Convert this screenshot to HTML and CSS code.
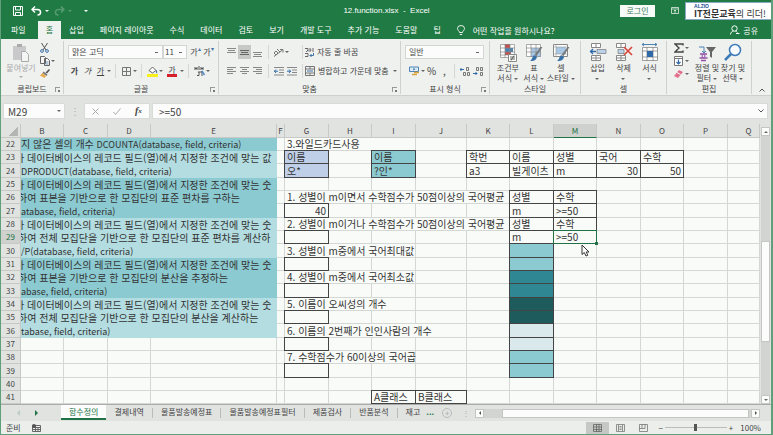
FILE: index.html
```
<!DOCTYPE html>
<html lang="ko">
<head>
	<meta charset="UTF-8">
	<title>12.function.xlsx - Excel</title>
	<link rel="stylesheet" href="styles.css">
</head>
<body>

<header class="titlebar">
	<div class="quick">
		<button class="icon" aria-label="저장"><svg width="10" height="10" viewBox="0 0 10 10"><path d="M.5.5h9v9h-9zM2.500.5v3.500h5v-3.500M2.500 9.500v-3h5v3" fill="none" stroke="#fff"/></svg></button>
		<button class="icon" aria-label="실행 취소"><svg width="11" height="10" viewBox="0 0 11 10"><path d="M1 3.500h5.500a3 2.700 0 0 1 0 5.500M4 .5l-3 3 3 3" fill="none" stroke="#fff" stroke-width="1.500"/></svg></button>
		<i class="caret light"></i>
		<button class="icon dim" aria-label="다시 실행"><svg width="11" height="10" viewBox="0 0 11 10"><path d="M10 3.500h-5.500a3 2.700 0 0 0 0 5.500M7 .5l3 3-3 3" fill="none" stroke="#fff" stroke-width="1.500"/></svg></button>
		<i class="caret light dim"></i>
		<i class="caret light more"></i>
	</div>
	<div class="doc">12.function.xlsx &nbsp;- &nbsp;Excel</div>
	<div class="account">
		<button class="login">로그인</button>
		<button class="icon" aria-label="리본 메뉴 표시 옵션"><svg width="8" height="7" viewBox="0 0 8 7"><path d="M.5.5h7v6h-7zM.5 2h7M4 6V3M2.800 4.200L4 3l1.200 1.200" fill="none" stroke="#dfeee4" stroke-width=".8"/></svg></button>
		<div class="banner">
			<small>ALZIO</small>
			<p><b>IT전문교육</b>의 리더!</p>
		</div>
	</div>
</header>

<nav class="menu">
	<a href="#" class="file">파일</a>
	<a href="#" class="current">홈</a>
	<a href="#">삽입</a>
	<a href="#">페이지 레이아웃</a>
	<a href="#">수식</a>
	<a href="#">데이터</a>
	<a href="#">검토</a>
	<a href="#">보기</a>
	<a href="#">개발 도구</a>
	<a href="#">추가 기능</a>
	<a href="#">도움말</a>
	<a href="#">팁</a>
	<a href="#" class="tell"><svg width="8" height="11" viewBox="0 0 8 11"><path d="M2.500 7.500c0-1.500-2-2-2-4a3.500 3 0 0 1 7 0c0 2-2 2.500-2 4zM2.800 9.500h2.400" fill="none" stroke="#fff" stroke-width=".9"/></svg>어떤 작업을 원하시나요?</a>
	<a href="#" class="share"><svg width="10" height="10" viewBox="0 0 10 10"><circle cx="4.500" cy="3.500" r="2.700" fill="none" stroke="#fff"/><path d="M.5 9.500c0-2 1.500-3 3-3.500M5.500 6.200c1.200.3 1.500.8 2 1.300M6 8.500h3.500" fill="none" stroke="#fff"/></svg>공유</a>
</nav>

<div class="ribbon">
	<section class="group clipboard">
		<div class="tools">
			<button class="big off">
				<svg width="18" height="20" viewBox="0 0 18 20"><path d="M1 3h13v14H1z" fill="#c9c9cb"/><path d="M5 1h5v3H5z" fill="#aaa"/><path d="M9.500 8.500h4l3 3v7h-7z" fill="#f4f4f4" stroke="#aaa"/></svg>
				<span>붙여넣기</span><i class="caret"></i>
			</button>
			<div class="stack">
				<button class="icon" aria-label="잘라내기"><svg width="9" height="10" viewBox="0 0 9 10"><path d="M1.500 0l4.500 7M7.500 0L3 7" stroke="#555" fill="none"/><circle cx="2" cy="8" r="1.400" fill="none" stroke="#4173a8"/><circle cx="7" cy="8" r="1.400" fill="none" stroke="#4173a8"/></svg></button>
				<div class="line"><button class="icon" aria-label="복사"><svg width="10" height="10" viewBox="0 0 10 10"><path d="M.5.5h4l1 1v6h-5zM4.500 2.500h3l2 2v5h-5z" fill="#f5f5f5" stroke="#666"/><path d="M5.500 6h3M5.500 8h3" stroke="#4173a8" stroke-width=".7"/></svg></button><i class="caret"></i></div>
				<button class="icon" aria-label="서식 복사"><svg width="10" height="9" viewBox="0 0 10 9"><path d="M5.500 3.500L9 0l1 1-3 3.500z" fill="#555"/><path d="M3.500 2.500l4 3-1 1.500-4-3z" fill="#777"/><path d="M2.500 4l3.500 3-1.500 2L0 6.500z" fill="#e7ab4d"/></svg></button>
			</div>
		</div>
		<h2>클립보드<i class="launch"></i></h2>
	</section>

	<section class="group font">
		<div class="tools rows">
			<div class="line">
				<select class="fontname" aria-label="글꼴"><option>맑은 고딕</option></select>
				<select class="fontsize" aria-label="글꼴 크기"><option>11</option></select>
				<button class="letter up">가<sup>▴</sup></button>
				<button class="letter">가<sup>▾</sup></button>
			</div>
			<div class="line">
				<button class="letter"><b>가</b></button>
				<button class="letter"><em>가</em></button>
				<button class="letter"><u>가</u></button>
				<i class="caret"></i><i class="sep"></i>
				<button class="icon" aria-label="테두리"><svg width="9" height="9" viewBox="0 0 9 9"><path d="M.5.5h8v8h-8zM4.500 0v9M0 4.500h9" fill="none" stroke="#777"/></svg></button>
				<i class="caret"></i><i class="sep"></i>
				<button class="icon" aria-label="채우기 색"><svg width="11" height="11" viewBox="0 0 11 11"><path d="M2 4.500L5.500 1 9 4.500 5.500 7z" fill="#fff" stroke="#666"/><path d="M9 4c1.500 1 1.500 2.500.8 3.500-.8-.5-.8-2-.8-3.500z" fill="#4173a8"/><path d="M0 8h11v3H0z" fill="#f7f01b"/></svg></button>
				<i class="caret"></i>
				<button class="letter red">가</button>
				<i class="caret"></i><i class="sep"></i>
				<button class="icon" aria-label="윗주 필드"><svg width="11" height="10" viewBox="0 0 11 10"><path d="M1 1v3M3 1v3M1 2.500h2M5 0v4M7 1v3M9 1v3M7 2.500h2M4 6h4M5 6v3.500M8 5v5M3 9.500h2" fill="none" stroke="#555"/><path d="M8 5l2.500 4" stroke="#4b8ac9" stroke-width="1.500"/></svg></button>
				<i class="caret"></i>
			</div>
		</div>
		<h2>글꼴<i class="launch"></i></h2>
	</section>

	<section class="group align">
		<div class="tools rows">
			<div class="line">
				<button class="icon" aria-label="위쪽 맞춤"><svg width="9" height="9" viewBox="0 0 9 9"><path d="M0 .5h9M1 2.500h7M0 4.500h9" stroke="#888"/></svg></button>
				<button class="icon pressed" aria-label="가운데 맞춤"><svg width="9" height="9" viewBox="0 0 9 9"><path d="M0 2.500h9M1 4.500h7M0 6.500h9" stroke="#666"/></svg></button>
				<button class="icon" aria-label="아래쪽 맞춤"><svg width="9" height="9" viewBox="0 0 9 9"><path d="M0 4.500h9M1 6.500h7M0 8.500h9" stroke="#888"/></svg></button>
				<i class="sep"></i>
				<button class="icon" aria-label="방향"><svg width="11" height="9" viewBox="0 0 11 9"><path d="M1 8.500L9.500 2M7 1.500h3v3M1 5l2-2 2 2-2 2zM4 1l3 3" fill="none" stroke="#777"/></svg></button>
				<i class="caret"></i><i class="sep wide"></i>
				<button class="text"><svg width="9" height="9" viewBox="0 0 9 9"><path d="M0 .5h3v3M1 4l2-2M5 0v4M5 2h1.500M8 0v4M0 5.500h3v3M0 8.500h3" fill="none" stroke="#666"/><path d="M8.500 5v2.500H5M6.500 6L5 7.500 6.500 9" fill="none" stroke="#4173a8"/></svg>자동 줄 바꿈</button>
			</div>
			<div class="line">
				<button class="icon" aria-label="왼쪽 맞춤"><svg width="9" height="8" viewBox="0 0 9 8"><path d="M0 .5h9M0 2.500h6M0 4.500h9M0 6.500h6" stroke="#888"/></svg></button>
				<button class="icon" aria-label="가운데"><svg width="9" height="8" viewBox="0 0 9 8"><path d="M0 .5h9M2 2.500h5M0 4.500h9M2 6.500h5" stroke="#888"/></svg></button>
				<button class="icon" aria-label="오른쪽 맞춤"><svg width="9" height="8" viewBox="0 0 9 8"><path d="M0 .5h9M3 2.500h6M0 4.500h9M3 6.500h6" stroke="#888"/></svg></button>
				<i class="sep"></i>
				<button class="icon" aria-label="내어쓰기"><svg width="10" height="9" viewBox="0 0 10 9"><path d="M0 .5h10M5 3h5M5 5.500h5M0 8h10" stroke="#888"/><path d="M0 4.200h4M2 2.500L.5 4.200 2 6" fill="none" stroke="#2f69a8"/></svg></button>
				<button class="icon" aria-label="들여쓰기"><svg width="10" height="9" viewBox="0 0 10 9"><path d="M0 .5h10M5 3h5M5 5.500h5M0 8h10" stroke="#888"/><path d="M0 4.200h4M2 2.500l1.500 1.700L2 6" fill="none" stroke="#2f69a8"/></svg></button>
				<i class="sep"></i>
				<button class="text"><svg width="10" height="10" viewBox="0 0 10 10"><path d="M.5.5h9v9h-9zM0 3h10M0 7h10M5 0v3M5 7v3" fill="none" stroke="#777"/><path d="M2 5h6" stroke="#4173a8"/></svg>병합하고 가운데 맞춤</button>
				<i class="caret"></i>
			</div>
		</div>
		<h2>맞춤<i class="launch"></i></h2>
	</section>

	<section class="group number">
		<div class="tools rows">
			<div class="line"><select class="format" aria-label="표시 형식"><option>일반</option></select></div>
			<div class="line">
				<button class="icon" aria-label="회계 표시 형식"><svg width="11" height="10" viewBox="0 0 11 10"><path d="M.5 1h9v4.500h-9z" fill="#dceaf5" stroke="#4c83b5"/><circle cx="5" cy="3.200" r="1" fill="#4c83b5"/><path d="M5 6.500h5M3 8.500h5" stroke="#dba33b" stroke-width="1.600"/></svg></button>
				<i class="caret"></i>
				<button class="icon percent">%</button>
				<button class="icon percent">,</button>
				<i class="sep"></i>
				<button class="icon" aria-label="자릿수 늘림"><svg width="10" height="9" viewBox="0 0 10 9"><path d="M0 2.500h4M1.500 1L0 2.500 1.500 4" fill="none" stroke="#2f69a8"/><path d="M6.500.5h2v3h-2zM3.500 5.500h2v3h-2zM7.500 5.500h2v3h-2z" fill="none" stroke="#777"/></svg></button>
				<button class="icon" aria-label="자릿수 줄임"><svg width="10" height="9" viewBox="0 0 10 9"><path d="M0 6.500h4M2.500 5L4 6.500 2.500 8" fill="none" stroke="#2f69a8"/><path d="M3.500.5h2v3h-2zM7.500.5h2v3h-2zM7.500 5.500h2v3h-2z" fill="none" stroke="#777"/></svg></button>
			</div>
		</div>
		<h2>표시 형식<i class="launch"></i></h2>
	</section>

	<section class="group styles">
		<div class="tools">
			<button class="big">
				<svg width="18" height="20" viewBox="0 0 18 20"><path d="M1 1h15v14H1z" fill="#fff"/><path d="M6 1h5v4H6zM6 9h6v3H6z" fill="#c5504b"/><path d="M6 5h8v4H6z" fill="#4c83b5"/><path d="M1.500 1.500h14v13h-14zM1 5h15M1 9h15M1 12h15M6 1v14M11 1v14" fill="none" stroke="#888" stroke-width=".7"/><path d="M9.500 11.500h8v7h-8z" fill="#fff" stroke="#888"/><path d="M11 14h5M11 16h5M15 12.500l-3 5" stroke="#444" stroke-width=".8"/></svg>
				<span>조건부<br>서식 <i class="caret"></i></span>
			</button>
			<button class="big">
				<svg width="18" height="20" viewBox="0 0 18 20"><path d="M1.500 1.500h14v12h-14z" fill="#fff"/><path d="M6 5h10v9H6z" fill="#a9c8e6"/><path d="M1.500 1.500h14v12h-14zM1 5h15M1 9h15M6 1v13M11 1v13" fill="none" stroke="#888" stroke-width=".7"/><path d="M17.500 4l-6 9-2-1 6-8z" fill="#777"/><path d="M9 12l3 2c-1 4-4 4-7 4 2-1 2-4 4-6z" fill="#376fa9"/></svg>
				<span>표<br>서식 <i class="caret"></i></span>
			</button>
			<button class="big">
				<svg width="18" height="20" viewBox="0 0 18 20"><path d="M1.500 1.500h14v12h-14z" fill="#fff" stroke="#888"/><path d="M4 4h10v7H4z" fill="#a9c8e6"/><path d="M1 4h15M1 11h15M4 1v13" stroke="#999" stroke-width=".6"/><path d="M17.500 4l-6 9-2-1 6-8z" fill="#777"/><path d="M9 12l3 2c-1 4-4 4-7 4 2-1 2-4 4-6z" fill="#376fa9"/></svg>
				<span>셀<br>스타일 <i class="caret"></i></span>
			</button>
		</div>
		<h2>스타일</h2>
	</section>

	<section class="group cells">
		<div class="tools">
			<button class="big">
				<svg width="18" height="20" viewBox="0 0 18 20"><path d="M2.500.5h9v4h-9zM7 0v5M2.500 12.500h9v5h-9zM7 12v6M2 15h10" fill="#fff" stroke="#888"/><path d="M8 6.500h9v4H8z" fill="#b9d2ea" stroke="#777" stroke-width=".7"/><path d="M1 8.500h6M4 6L1.500 8.500 4 11" fill="none" stroke="#2f69a8" stroke-width="1.300"/></svg>
				<span>삽입<br><i class="caret"></i></span>
			</button>
			<button class="big">
				<svg width="18" height="20" viewBox="0 0 18 20"><path d="M1.500.5h9v4h-9zM6 0v5M1.500 12.500h9v5h-9zM6 12v6M1 15h10" fill="#fff" stroke="#888"/><path d="M3 6.500h6v4H3z" fill="#b9d2ea" stroke="#777" stroke-width=".7"/><path d="M9 4l8 8M17 4l-8 8" stroke="#d9463a" stroke-width="1.700"/></svg>
				<span>삭제<br><i class="caret"></i></span>
			</button>
			<button class="big">
				<svg width="18" height="20" viewBox="0 0 18 20"><path d="M1.500 4.500h15v13h-15zM1 8h16M1 14h16M6 4v14M12 4v14" fill="#fff" stroke="#888" stroke-width=".8"/><path d="M6 8h6v6H6z" fill="#2f69a8"/><path d="M1 1.500h15M3 0L1 1.500 3 3M14 0l2 1.500L14 3" fill="none" stroke="#4c83b5"/></svg>
				<span>서식<br><i class="caret"></i></span>
			</button>
		</div>
		<h2>셀</h2>
	</section>

	<section class="group edit">
		<div class="tools">
			<div class="stack">
				<div class="line"><button class="icon" aria-label="합계"><svg width="10" height="10" viewBox="0 0 10 10"><path d="M9 2.500V1H1l4 4-4 4h8V7.500" fill="none" stroke="#444" stroke-width="1.400"/></svg></button><i class="caret"></i></div>
				<div class="line"><button class="icon" aria-label="채우기"><svg width="9" height="10" viewBox="0 0 9 10"><path d="M.5.5h8v9h-8zM0 2.500h9" fill="#fff" stroke="#777"/><path d="M4.500 3.500V8M2.500 6l2 2 2-2" fill="none" stroke="#2f69a8" stroke-width="1.200"/></svg></button><i class="caret"></i></div>
				<div class="line"><button class="icon" aria-label="지우기"><svg width="9" height="8" viewBox="0 0 9 8"><path d="M5 0l4 2-5 6-4-2z" fill="#e2708c"/><path d="M3 2.500l3.500 2" stroke="#fff"/></svg></button><i class="caret"></i></div>
			</div>
			<button class="big">
				<svg width="20" height="20" viewBox="0 0 20 20"><path d="M2 4h5v6M5 8l2 2 2-2" fill="none" stroke="#4c83b5"/><path d="M3 11h7M2.500 15h8M4 17.500h5" stroke="#9250a8" stroke-width="1.300"/><circle cx="6.500" cy="13" r="1.500" fill="none" stroke="#9250a8"/><path d="M9 4h10l-4 5v6l-2-1.500V9z" fill="#666"/></svg>
				<span>정렬 및<br>필터 <i class="caret"></i></span>
			</button>
			<button class="big">
				<svg width="18" height="20" viewBox="0 0 18 20"><circle cx="11" cy="7" r="5.500" fill="#fafcff" stroke="#3d7ab8" stroke-width="1.500"/><path d="M7 11l-6 6" stroke="#3d7ab8" stroke-width="2.500"/></svg>
				<span>찾기 및<br>선택 <i class="caret"></i></span>
			</button>
		</div>
		<h2>편집</h2>
	</section>
	<button class="fold" aria-label="리본 메뉴 축소"><svg width="6" height="4" viewBox="0 0 6 4"><path d="M.5 3.500L3 1l2.500 2.500" fill="none" stroke="#555"/></svg></button>
</div>

<div class="formula">
	<label class="namebox"><input type="text" value="M29" aria-label="이름 상자"><i class="caret"></i></label>
	<span class="grip">⋮</span>
	<div class="fx">
		<button class="icon" aria-label="취소"><svg width="7" height="7" viewBox="0 0 7 7"><path d="M.5.5l6 6M6.500.5l-6 6" stroke="#aaa"/></svg></button>
		<button class="icon" aria-label="입력"><svg width="8" height="7" viewBox="0 0 8 7"><path d="M.5 4l2 2.500L7.500.5" fill="none" stroke="#aaa"/></svg></button>
		<button class="icon func">f<sub>x</sub></button>
	</div>
	<label class="content"><input type="text" value="&gt;=50" aria-label="수식 입력줄"><svg width="6" height="4" viewBox="0 0 6 4"><path d="M.5.5L3 3 5.500.5" fill="none" stroke="#555"/></svg></label>
</div>

<main class="sheet">
<table>
	<colgroup>
		<col class="w20"><col class="w43"><col class="w44"><col class="w43"><col class="w126"><col class="w8"><col class="w44"><col class="w43"><col class="w44"><col class="w51"><col class="w43"><col class="w44"><col class="w43"><col class="w44"><col class="w43"><col class="w44"><col>
	</colgroup>
	<thead>
		<tr><th class="corner"></th><th>B</th><th>C</th><th>D</th><th>E</th><th>F</th><th>G</th><th>H</th><th>I</th><th>J</th><th>K</th><th>L</th><th class="on">M</th><th>N</th><th>O</th><th>P</th><th class="last">Q</th></tr>
	</thead>
	<tbody>
		<tr><th>22</th><td colspan="4" class="teal">지 않은 셀의 개수 <span class="en">DCOUNTA(database, field, criteria)</span></td><td></td><td colspan="3">3.와일드카드사용</td><td></td><td></td><td></td><td></td><td></td><td></td><td></td><td></td></tr>
		<tr><th>23</th><td colspan="4" class="pale cut">가 데이터베이스의 레코드 필드(열)에서 지정한 조건에 맞는 값</td><td></td><td class="box blue">이름</td><td></td><td class="box teal">이름</td><td></td><td class="box">학번</td><td class="box">이름</td><td class="box">성별</td><td class="box">국어</td><td class="box">수학</td><td></td><td></td></tr>
		<tr><th>24</th><td colspan="4" class="pale"><span class="en">DPRODUCT(database, field, criteria)</span></td><td></td><td class="box blue">오*</td><td></td><td class="box teal">?인*</td><td></td><td class="box">a3</td><td class="box">빌게이츠</td><td class="box">m</td><td class="box num">30</td><td class="box num">50</td><td></td><td></td></tr>
		<tr><th>25</th><td colspan="4" class="teal cut">가 데이터베이스의 레코드 필드(열)에서 지정한 조건에 맞는 숫</td><td></td><td></td><td></td><td></td><td></td><td></td><td></td><td></td><td></td><td></td><td></td><td></td></tr>
		<tr><th>26</th><td colspan="4" class="teal nip">하여 표본을 기반으로 한 모집단의 표준 편차를 구하는</td><td></td><td colspan="5">1. 성별이 m이면서 수학점수가 50점이상의 국어평균</td><td class="box">성별</td><td class="box">수학</td><td></td><td></td><td></td><td></td></tr>
		<tr><th>27</th><td colspan="4" class="teal"><span class="en">atabase, field, criteria)</span></td><td></td><td class="box num">40</td><td></td><td></td><td></td><td></td><td class="box">m</td><td class="box">&gt;=50</td><td></td><td></td><td></td><td></td></tr>
		<tr><th>28</th><td colspan="4" class="pale cut">가 데이터베이스의 레코드 필드(열)에서 지정한 조건에 맞는 숫</td><td></td><td colspan="5">2. 성별이 m이거나 수학점수가 50점이상의 국어평균</td><td class="box">성별</td><td class="box">수학</td><td></td><td></td><td></td><td></td></tr>
		<tr><th class="on">29</th><td colspan="4" class="pale nip">하여 전체 모집단을 기반으로 한 모집단의 표준 편차를 계산하</td><td></td><td class="box"></td><td></td><td></td><td></td><td></td><td class="box">m</td><td class="box active">&gt;=50<svg class="pointer" width="9" height="13" viewBox="0 0 9 13"><path d="M1 1v9.500l2.300-2L5 12l1.800-.8L5.200 8H8z" fill="#fff" stroke="#333"/></svg></td><td></td><td></td><td></td><td></td></tr>
		<tr><th>30</th><td colspan="4" class="pale"><span class="en">/P(database, field, criteria)</span></td><td></td><td colspan="3">3. 성별이 m중에서 국어최대값</td><td></td><td></td><td class="box teal"></td><td></td><td></td><td></td><td></td><td></td></tr>
		<tr><th>31</th><td colspan="4" class="teal cut">가 데이터베이스의 레코드 필드(열)에서 지정한 조건에 맞는 숫</td><td></td><td class="box"></td><td></td><td></td><td></td><td></td><td class="box teal"></td><td></td><td></td><td></td><td></td><td></td></tr>
		<tr><th>32</th><td colspan="4" class="teal nip">하여 표본을 기반으로 한 모집단의 분산을 추정하는</td><td></td><td colspan="3">4. 성별이 m중에서 국어최소값</td><td></td><td></td><td class="box deep"></td><td></td><td></td><td></td><td></td><td></td></tr>
		<tr><th>33</th><td colspan="4" class="teal"><span class="en">abase, field, criteria)</span></td><td></td><td class="box"></td><td></td><td></td><td></td><td></td><td class="box deep"></td><td></td><td></td><td></td><td></td><td></td></tr>
		<tr><th>34</th><td colspan="4" class="pale cut">가 데이터베이스의 레코드 필드(열)에서 지정한 조건에 맞는 숫</td><td></td><td colspan="3">5. 이름이 오씨성의 개수</td><td></td><td></td><td class="box dark"></td><td></td><td></td><td></td><td></td><td></td></tr>
		<tr><th>35</th><td colspan="4" class="pale nip">하여 전체 모집단을 기반으로 한 모집단의 분산을 계산하는</td><td></td><td class="box"></td><td></td><td></td><td></td><td></td><td class="box dark"></td><td></td><td></td><td></td><td></td><td></td></tr>
		<tr><th>36</th><td colspan="4" class="pale"><span class="en">tabase, field, criteria)</span></td><td></td><td colspan="4">6. 이름의 2번째가 인인사람의 개수</td><td></td><td class="box mist"></td><td></td><td></td><td></td><td></td><td></td></tr>
		<tr><th>37</th><td></td><td></td><td></td><td></td><td></td><td class="box"></td><td></td><td></td><td></td><td></td><td class="box mist"></td><td></td><td></td><td></td><td></td><td></td></tr>
		<tr><th>38</th><td></td><td></td><td></td><td></td><td></td><td colspan="3">7. 수학점수가 60이상의 국어곱</td><td></td><td></td><td class="box teal"></td><td></td><td></td><td></td><td></td><td></td></tr>
		<tr><th>39</th><td></td><td></td><td></td><td></td><td></td><td class="box"></td><td></td><td></td><td></td><td></td><td class="box teal"></td><td></td><td></td><td></td><td></td><td></td></tr>
		<tr><th>40</th><td></td><td></td><td></td><td></td><td></td><td></td><td></td><td></td><td></td><td></td><td></td><td></td><td></td><td></td><td></td><td></td></tr>
		<tr><th>41</th><td></td><td></td><td></td><td></td><td></td><td></td><td></td><td class="box">A클래스</td><td class="box">B클래스</td><td></td><td></td><td></td><td></td><td></td><td></td><td></td></tr>
	</tbody>
</table>
<div class="vscroll">
	<button aria-label="위로"><i class="caret flip"></i></button>
	<div class="track"><div class="thumb"></div></div>
	<button aria-label="아래로"><i class="caret"></i></button>
</div>
</main>

<div class="tabs">
	<div class="arrows"><i class="left"></i><i class="right"></i></div>
	<a href="#" class="current">함수정의</a>
	<a href="#">결제내역</a>
	<a href="#">물품발송예정표</a>
	<a href="#">물품발송예정표필터</a>
	<a href="#">제품검사</a>
	<a href="#">반품분석</a>
	<a href="#" class="end">재고</a>
	<span class="dots">...</span>
	<button class="add" aria-label="새 시트">+</button>
	<span class="grip">⋮</span>
	<div class="hscroll">
		<button aria-label="왼쪽"><i class="left"></i></button>
		<div class="track"><div class="thumb"></div></div>
		<button aria-label="오른쪽"><i class="right"></i></button>
	</div>
</div>

<footer class="status">
	<span>준비</span>
	<svg width="9" height="8" viewBox="0 0 9 8"><path d="M.5 1.500h8v6h-8zM0 3.500h9M0 5.500h9M3.500 1v7M6 3v5" fill="none" stroke="#666"/><circle cx="2" cy="2" r="2" fill="#555"/></svg>
	<div class="views">
		<button class="pressed" aria-label="기본"><svg width="9" height="8" viewBox="0 0 9 8"><path d="M.5.5h8v7h-8zM0 3h9M0 5.500h9M3.500 0v8M6 0v8" fill="none" stroke="#666" stroke-width=".8"/></svg></button>
		<button aria-label="페이지 레이아웃"><svg width="9" height="8" viewBox="0 0 9 8"><path d="M.5.5h8v7h-8zM2.500 1v6M6.500 1v6M3.500 2.500h2M3.500 4h2M3.500 5.500h2" fill="none" stroke="#777" stroke-width=".8"/></svg></button>
		<button aria-label="페이지 나누기"><svg width="9" height="8" viewBox="0 0 9 8"><path d="M.5.5h8v7h-8zM3 0v4.500M6 0v4.500M0 4.500h6" fill="none" stroke="#777" stroke-width=".8"/></svg></button>
	</div>
	<div class="zoom">
		<button aria-label="축소">−</button>
		<input type="range" min="10" max="190" value="100" aria-label="확대/축소">
		<button aria-label="확대">+</button>
		<span>100%</span>
	</div>
</footer>

</body>
</html>
```
FILE: styles.css
```
* {
	box-sizing: border-box;
}

body {
	margin: 0;
	min-height: 100vh;
	display: flex;
	flex-direction: column;
	border: 1px solid #5f9f79;
	border-top: none;
	border-right-width: 2px;
	background: #e1e3e1;
	color: #444;
	font-family: "Noto Sans CJK KR", sans-serif;
	font-size: 8px;
	line-height: 10px;
	overflow: hidden;
}

a {
	color: inherit;
	text-decoration: none;
}

button, input, select {
	font: inherit;
	color: inherit;
	margin: 0;
	padding: 0;
	border: none;
	background: none;
}

svg {
	display: block;
	flex: none;
}

p, h2 {
	margin: 0;
}

.icon {
	display: flex;
	align-items: center;
	justify-content: center;
	width: 13px;
	height: 14px;
}

.pressed {
	background: #c6c8c6;
}

.caret {
	display: inline-block;
	flex: none;
	border: 2px solid transparent;
	border-top-color: #666;
	border-bottom: none;
}

.caret.light {
	border-top-color: #fff;
}

.caret.flip {
	transform: rotate(180deg);
}

.left, .right {
	border: 3px solid transparent;
	border-left-color: #217346;
	border-right: none;
}

.left {
	transform: rotate(180deg);
}

.line {
	display: flex;
	align-items: center;
}

.dim {
	opacity: .25;
}

/* title */

.titlebar, .menu {
	background: #1f7a43;
	color: #fff;
	margin: 0 -2px 0 -1px;
	display: flex;
}

.titlebar {
	height: 21px;
	justify-content: space-between;
}

.quick, .account {
	flex: 1;
	display: flex;
	align-items: center;
}

.quick .icon:first-child {
	margin-left: 11px;
}

.quick .icon + .icon {
	margin-left: 6px;
}

.quick .caret {
	margin: 0 4px 0 2px;
}

.quick .more {
	margin-left: 8px;
}

.doc {
	font-family: "Liberation Sans", sans-serif;
	line-height: 21px;
}

.account {
	justify-content: flex-end;
}

.login {
	width: 35px;
	height: 12px;
	margin-right: 13px;
	background: #f8faf8;
	color: #3f7c59;
}

.banner {
	width: 88px;
	height: 18px;
	margin-left: 4px;
	padding: 1px 0 0 8px;
	background: #fff;
	border: 1px solid #8ba9c4;
	color: #333;
	font-size: 9px;
	line-height: 11px;
	white-space: nowrap;
}

.banner small {
	display: block;
	color: #1d4f91;
	font-family: "Liberation Sans", sans-serif;
	font-size: 5px;
	font-weight: bold;
	line-height: 4px;
}

.menu {
	height: 18px;
	line-height: 17px;
}

.menu a {
	padding: 0 8px;
	white-space: nowrap;
}

.menu .file {
	padding: 0 12px 0 11px;
}

.menu .current {
	background: #f0f2f0;
	color: #1f7a43;
}

.menu .tell, .menu .share {
	display: flex;
	align-items: center;
	gap: 8px;
}

.menu .share {
	gap: 3px;
	margin-left: auto;
	padding-right: 15px;
}

/* ribbon */

.ribbon {
	display: flex;
	height: 57px;
	background: #eff1ef;
	border-bottom: 1px solid #cdd0cd;
}

.group {
	flex: none;
	display: flex;
	flex-direction: column;
	margin: 2px 0 1px;
	border-right: 1px solid #cfd1cf;
}

.group h2 {
	position: relative;
	font-size: 8px;
	font-weight: normal;
	line-height: 10px;
	text-align: center;
}

.launch {
	position: absolute;
	right: 3px;
	bottom: 2px;
	width: 5px;
	height: 5px;
	border: 1px solid #999;
	border-right: none;
	border-bottom: none;
}

.launch::after {
	content: "";
	position: absolute;
	right: 0;
	bottom: 0;
	width: 2px;
	height: 2px;
	background: #777;
}

.tools {
	flex: 1;
	display: flex;
	justify-content: center;
}

.tools.rows {
	flex-direction: column;
	justify-content: flex-start;
	padding: 4px 0 0 4px;
	gap: 5px;
}

.rows .line {
	height: 14px;
}

.stack {
	width: 22px;
}

.stack .icon {
	height: 13px;
}

.clipboard { width: 63px; }
.font { width: 155px; }
.align { width: 182px; }
.number { width: 89px; }
.styles { width: 91px; }
.cells { width: 86px; }
.edit { width: 85px; }

.big {
	display: flex;
	flex-direction: column;
	align-items: center;
	justify-content: flex-start;
	min-width: 26px;
	padding-top: 2px;
	line-height: 10px;
	white-space: nowrap;
}

.big .caret {
	vertical-align: middle;
}

.off {
	color: #aaa;
	width: 34px;
}

.off .caret {
	margin-top: 3px;
	border-top-color: #aaa;
}

select {
	appearance: none;
	height: 14px;
	padding: 0 3px;
	border: 1px solid #d3d5d3;
	background: #fbfcfb linear-gradient(#666, #666) no-repeat right 4px center / 3px 1px;
}

.fontname { width: 95px; }

.fontsize {
	width: 24px;
	padding: 0 1px;
}

.format { width: 79px; }

.letter {
	width: 13px;
	white-space: nowrap;
}

.letter sup {
	color: #4173a8;
	font-size: 6px;
	line-height: 1px;
}

.letter.up {
	margin-left: 2px;
}

.letter.red {
	height: 11px;
	width: 10px;
	margin: 0 3px 0 4px;
	line-height: 8px;
	border-bottom: 3px solid #d8202a;
}

.sep {
	width: 1px;
	height: 14px;
	margin: 0 4px;
	background: #d5d7d5;
}

.sep + .text {
	margin-left: -1px;
}

.align .rows {
	padding-left: 6px;
}

.align .sep {
	margin-right: 3px;
}

.align .sep.wide {
	margin-left: 13px;
}

.number .icon:first-child {
	margin-left: 3px;
}

.number .sep {
	margin: 0 3px;
}

.text {
	display: flex;
	align-items: center;
	gap: 3px;
	margin-right: 4px;
	white-space: nowrap;
}

.percent {
	font-size: 10px;
}

.fold {
	display: flex;
	align-items: flex-end;
	justify-content: center;
	flex: 1;
	padding-bottom: 3px;
}

/* formula bar */

.formula {
	display: flex;
	height: 28px;
	padding: 7px 3px 5px 2px;
	font-size: 10px;
}

.formula label, .fx {
	display: flex;
	align-items: center;
	background: #fbfcfb;
	border: 1px solid #d9dbd9;
}

.formula input {
	width: 100%;
	padding-left: 4px;
}

.namebox {
	width: 62px;
	padding-right: 3px;
}

.grip {
	width: 19px;
	color: #aaa;
	text-align: center;
	line-height: 15px;
}

.fx {
	width: 66px;
	justify-content: space-around;
}

.func {
	font-family: "Liberation Serif", serif;
	font-style: italic;
	font-weight: bold;
}

.func sub {
	font-size: 7px;
}

.formula .content {
	flex: 1;
	margin-left: 2px;
	padding: 0 3px 0 2px;
}

/* grid */

.sheet {
	display: flex;
}

table {
	flex: 1;
	width: 0;
	table-layout: fixed;
	border-collapse: separate;
	border-spacing: 0;
	background: #f9fbf8;
	color: #333;
	font-size: 10px;
	line-height: 12px;
}

.w8 { width: 8px; }
.w20 { width: 20px; }
.w43 { width: 43px; }
.w44 { width: 44px; }
.w51 { width: 51px; }
.w126 { width: 126px; }

tr {
	height: 13px;
}

thead tr, tbody tr:nth-child(3n) {
	height: 14px;
}

td {
	padding: 0 2px;
	border: 1px solid #d4d7d4;
	border-width: 0 1px 1px 0;
	white-space: nowrap;
}

th {
	padding: 0;
	background: #e1e3e1;
	border: 1px solid #c6c9c6;
	border-width: 0 1px 1px 0;
	color: #444;
	font-size: 8px;
	font-weight: normal;
}

th.on {
	background: #ced1ce;
	color: #217346;
}

thead .on {
	border-bottom-color: #217346;
}

.last {
	padding-left: 10px;
}

.corner {
	background: linear-gradient(135deg, transparent 50%, #b3b6b3 50%) no-repeat right 2px bottom 1px / 9px 9px #e1e3e1;
}

td[colspan="4"].teal, td[colspan="4"].pale {
	border: none;
	padding-left: 0;
}

/* text that starts in column A, scrolled out of view */
.cut, .nip {
	overflow-x: clip;
	overflow-y: visible;
}

.cut { text-indent: -6px; }
.nip { text-indent: -3px; }

.en { font-size: 9px; }
.num { text-align: right; }

.teal { background: #8ccad1; }
.pale { background: #b3dde1; }
.blue { background: #c0cfe8; }
.deep { background: #2e8792; }
.dark { background: #1e5b5c; }
.mist { background: #d9e9ec; }

.box {
	border-color: #444;
	box-shadow: -1px 0 #444, 0 -1px #444, -1px -1px #444;
}

.active {
	position: relative;
	border-color: #217346;
	box-shadow: -1px 0 #217346, 0 -1px #217346, -1px -1px #217346;
}

.active::after {
	content: "";
	position: absolute;
	right: -2px;
	bottom: -2px;
	width: 3px;
	height: 3px;
	background: #217346;
}

.pointer {
	position: absolute;
	left: 27px;
	top: 13px;
}

/* scroll bars */

.vscroll {
	width: 11px;
	display: flex;
	flex-direction: column;
	align-items: center;
	padding-top: 3px;
}

.vscroll button, .hscroll button {
	display: flex;
	align-items: center;
	justify-content: center;
	width: 9px;
	height: 9px;
	background: #fbfcfb;
	border: 1px solid #c4c6c4;
}

.track {
	flex: 1;
	background: #d2d4d2;
}

.thumb {
	background: #fbfcfb;
	border: 1px solid #c4c6c4;
}

.vscroll .track {
	width: 9px;
	padding-top: 105px;
}

.vscroll .thumb {
	height: 101px;
}

/* sheet tabs */

.tabs {
	display: flex;
	height: 17px;
	padding-right: 11px;
	border-top: 1px solid #a9aca9;
	line-height: 14px;
}

.arrows {
	display: flex;
	align-items: center;
	justify-content: center;
	gap: 15px;
	width: 60px;
	padding-right: 8px;
}

.arrows .left {
	opacity: .2;
}

.tabs a {
	padding: 0 9px 0 8px;
	white-space: nowrap;
	background: linear-gradient(#bbb, #bbb) no-repeat right 3px / 1px 10px;
}

.tabs a.current {
	height: 15px;
	padding: 0 8px;
	background: #fbfcfb;
	border-bottom: 2px solid #217346;
	color: #217346;
}

.tabs a.end {
	background: none;
	padding-right: 6px;
}

.dots {
	color: #217346;
	font-weight: bold;
}

.add {
	width: 10px;
	height: 10px;
	margin: 3px 4px 0 8px;
	border: 1px solid #bbb;
	border-radius: 50%;
	color: #aaa;
	line-height: 8px;
}

.hscroll {
	flex: 1;
	display: flex;
	align-items: center;
}

.hscroll .track {
	padding: 0 2px 0 18px;
}

.hscroll .thumb {
	height: 9px;
}

.hscroll i {
	border-width: 2px;
	border-right: none;
	border-left-color: #555;
}

/* status bar */

.status {
	display: flex;
	align-items: center;
	flex: 1;
	min-height: 13px;
	padding: 0 10px 0 5px;
	gap: 11px;
	background: #eceeec;
}

.views {
	display: flex;
	margin-left: auto;
}

.views button {
	display: flex;
	align-items: center;
	justify-content: center;
	width: 23px;
	height: 12px;
}

.zoom {
	display: flex;
	align-items: center;
	gap: 2px;
	margin-left: -8px;
}

.zoom span {
	margin-left: 5px;
}

.zoom input {
	appearance: none;
	width: 62px;
	height: 8px;
	background: linear-gradient(#bbb, #bbb) no-repeat center / 100% 1px;
}

.zoom input::-webkit-slider-thumb {
	appearance: none;
	width: 3px;
	height: 7px;
	background: #555;
}
```
